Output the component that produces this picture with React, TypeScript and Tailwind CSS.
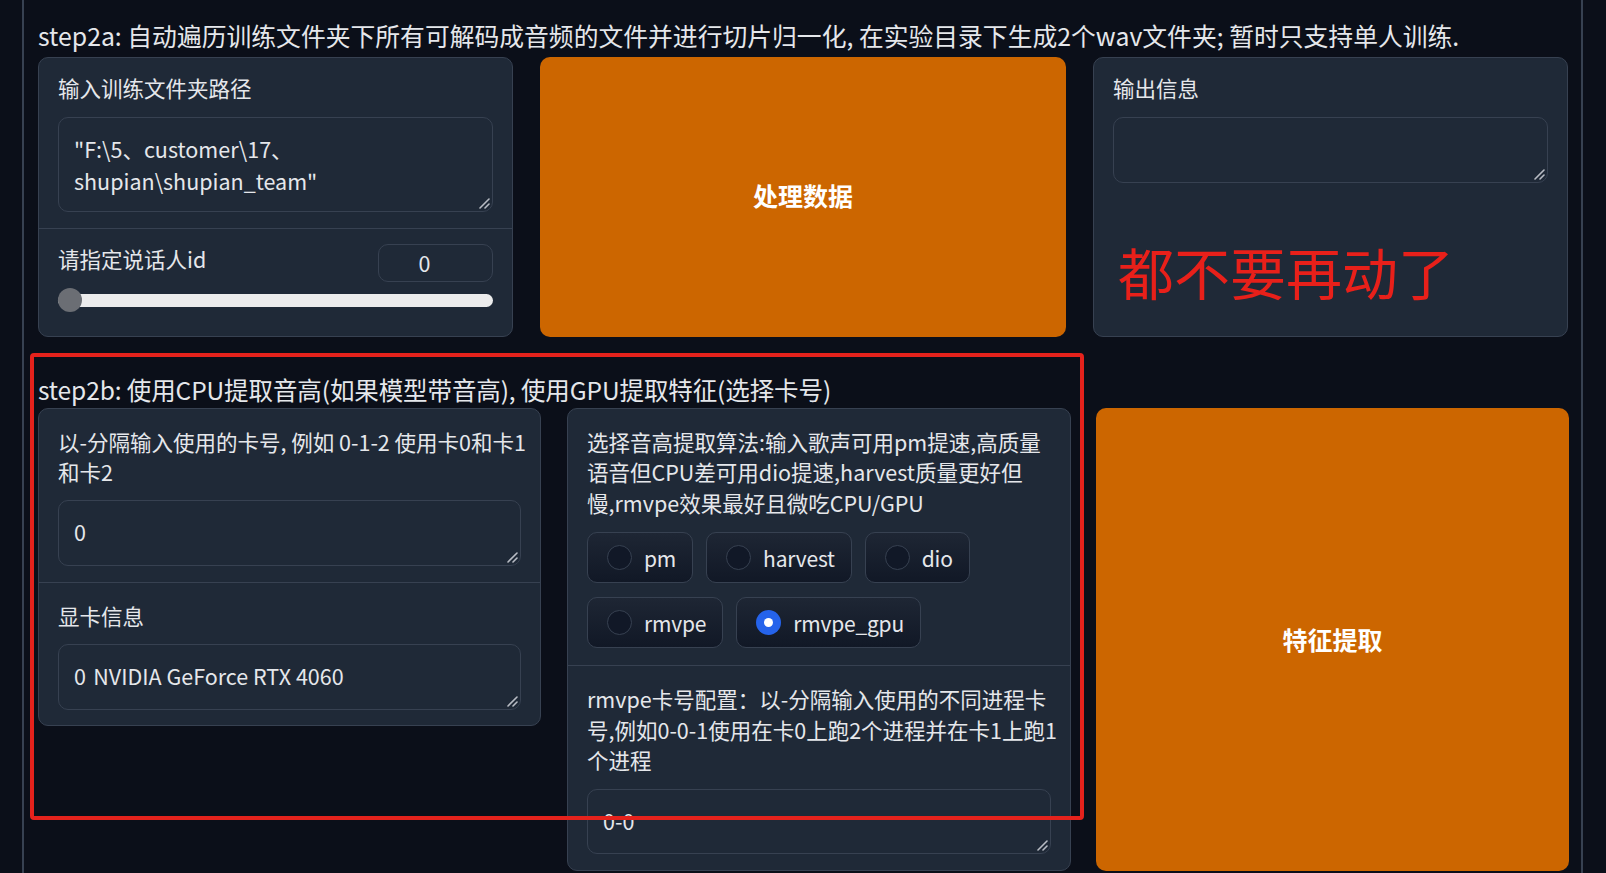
import React from "react";

const labelCls = "text-[21.5px] leading-[30.5px] text-[#e5e7eb] whitespace-nowrap";
const taCls =
  "block w-full resize-none rounded-[10px] border border-[#374151] bg-[#1f2937] px-[15px] py-[15px] text-[21.5px] leading-[32px] text-[#e5e7eb] outline-none overflow-hidden";

function TextArea({ value, h, extra = "" }: { value: string; h: string; extra?: string }) {
  return (
    <div className={`relative ${extra}`}>
      <textarea readOnly className={`${taCls} ${h}`} defaultValue={value} />
      <svg
        className="pointer-events-none absolute bottom-[3px] right-[3px]"
        width="12"
        height="12"
        viewBox="0 0 12 12"
      >
        <path d="M11 2 L2 11" stroke="#b8bcc4" strokeWidth="1.6" strokeLinecap="round" />
        <path d="M11 7 L7 11" stroke="#b8bcc4" strokeWidth="1.6" strokeLinecap="round" />
      </svg>
    </div>
  );
}

function Radio({ label, checked }: { label: string; checked?: boolean }) {
  return (
    <div className="flex h-[51px] items-center gap-[12px] rounded-[10px] border border-[#374151] bg-linear-to-b from-[#1e2634] to-[#111826] pl-[19px] pr-[16px]">
      {checked ? (
        <span className="flex h-[25px] w-[25px] items-center justify-center rounded-full bg-[#2563eb]">
          <span className="h-[9px] w-[9px] rounded-full bg-white" />
        </span>
      ) : (
        <span className="h-[25px] w-[25px] rounded-full border border-[#374151] bg-[#111827]" />
      )}
      <span className="text-[21px] leading-[30px] tracking-[-0.2px] text-[#e5e7eb]">{label}</span>
    </div>
  );
}

export default function App() {
  return (
    <div className="min-h-screen overflow-hidden bg-[#0b0f19] font-['Noto_Sans_CJK_SC','Noto_Sans',sans-serif]">
      <div className="relative ml-[22px] w-[1561px] border-x-2 border-[#374151] pl-[14px] pr-[12px] pt-[17px] pb-[20px]">
        <div className="mb-[4px] whitespace-nowrap text-[24.8px] leading-[36px] text-[#e5e7eb]">
          step2a: 自动遍历训练文件夹下所有可解码成音频的文件并进行切片归一化, 在实验目录下生成2个wav文件夹; 暂时只支持单人训练.
        </div>

        {/* row 1 */}
        <div className="flex h-[280px] gap-[27px]">
          <div className="flex w-[475px] flex-col rounded-[10px] border border-[#374151] bg-[#1f2937]">
            <div className="border-b border-[#374151] px-[19px] pt-[15px] pb-[16px]">
              <div className={labelCls}>输入训练文件夹路径</div>
              <TextArea
                extra="mt-[13px]"
                h="h-[95px]"
                value={'"F:\\5、customer\\17、shupian\\shupian_team"'}
              />
            </div>
            <div className="px-[19px] pt-[15px]">
              <div className="flex items-start">
                <div className={labelCls}>请指定说话人id</div>
                <input
                  readOnly
                  value="0"
                  className="ml-auto h-[38px] w-[115px] rounded-[10px] border border-[#374151] bg-[#1f2937] pr-[22px] text-center text-[21.5px] text-[#e5e7eb] outline-none"
                />
              </div>
              <div className="relative mt-[12px] h-[13px] w-full rounded-full bg-[#ececec]">
                <div className="absolute left-0 top-[-5.5px] h-[24px] w-[24px] rounded-full bg-[#6b6e74]" />
              </div>
            </div>
          </div>

          <button className="flex h-[280px] w-[526px] items-center justify-center rounded-[10px] bg-[#cc6600] pb-[2px] text-[25px] font-bold text-white">
            处理数据
          </button>

          <div className="flex w-[475px] flex-col rounded-[10px] border border-[#374151] bg-[#1f2937] px-[19px] pt-[15px]">
            <div className={labelCls}>输出信息</div>
            <TextArea extra="mt-[13px]" h="h-[66px]" value="" />
            <div className="ml-[5px] mt-[60px] whitespace-nowrap text-[56px] leading-[56px] text-[#e8201a]">
              都不要再动了
            </div>
          </div>
        </div>

        {/* step2b */}
        <div className="relative mt-[35px]">
          <div className="whitespace-nowrap text-[24.5px] leading-[36px] tracking-[-0.1px] text-[#e5e7eb]">
            step2b: 使用CPU提取音高(如果模型带音高), 使用GPU提取特征(选择卡号)
          </div>

          <div className="flex items-start">
            <div className="w-[503px] rounded-[10px] border border-[#374151] bg-[#1f2937]">
              <div className="border-b border-[#374151] px-[19px] pt-[17.5px] pb-[16px]">
                <div className={labelCls}>
                  <div>以-分隔输入使用的卡号, 例如 0-1-2 使用卡0和卡1</div>
                  <div>和卡2</div>
                </div>
                <TextArea extra="mt-[12.5px]" h="h-[66px]" value="0" />
              </div>
              <div className="px-[19px] pt-[17.5px] pb-[15.5px]">
                <div className={labelCls}>显卡信息</div>
                <TextArea extra="mt-[12.5px]" h="h-[66px]" value={"0\tNVIDIA GeForce RTX 4060"} />
              </div>
            </div>

            <div className="ml-[26px] h-[463px] w-[504px] rounded-[10px] border border-[#374151] bg-[#1f2937]">
              <div className="border-b border-[#374151] px-[19px] pt-[17.5px] pb-[16.5px]">
                <div className={labelCls}>
                  <div>选择音高提取算法:输入歌声可用pm提速,高质量</div>
                  <div>语音但CPU差可用dio提速,harvest质量更好但</div>
                  <div>慢,rmvpe效果最好且微吃CPU/GPU</div>
                </div>
                <div className="mt-[14px] flex flex-wrap gap-x-[13px] gap-y-[14px]">
                  <Radio label="pm" />
                  <Radio label="harvest" />
                  <Radio label="dio" />
                  <Radio label="rmvpe" />
                  <Radio label="rmvpe_gpu" checked />
                </div>
              </div>
              <div className="px-[19px] pt-[18.5px]">
                <div className={labelCls}>
                  <div>rmvpe卡号配置：以-分隔输入使用的不同进程卡</div>
                  <div>号,例如0-0-1使用在卡0上跑2个进程并在卡1上跑1</div>
                  <div>个进程</div>
                </div>
                <TextArea extra="mt-[13px]" h="h-[65px]" value="0-0" />
              </div>
            </div>

            <button className="ml-[25px] flex h-[463px] w-[473px] items-center justify-center rounded-[10px] bg-[#cc6600] text-[25px] font-bold text-white">
              特征提取
            </button>
          </div>

          {/* red annotation frame */}
          <div className="pointer-events-none absolute left-[-8px] top-[-19px] h-[467px] w-[1054px] rounded-[4px] border-4 border-[#e5221c]" />
        </div>
      </div>
    </div>
  );
}
